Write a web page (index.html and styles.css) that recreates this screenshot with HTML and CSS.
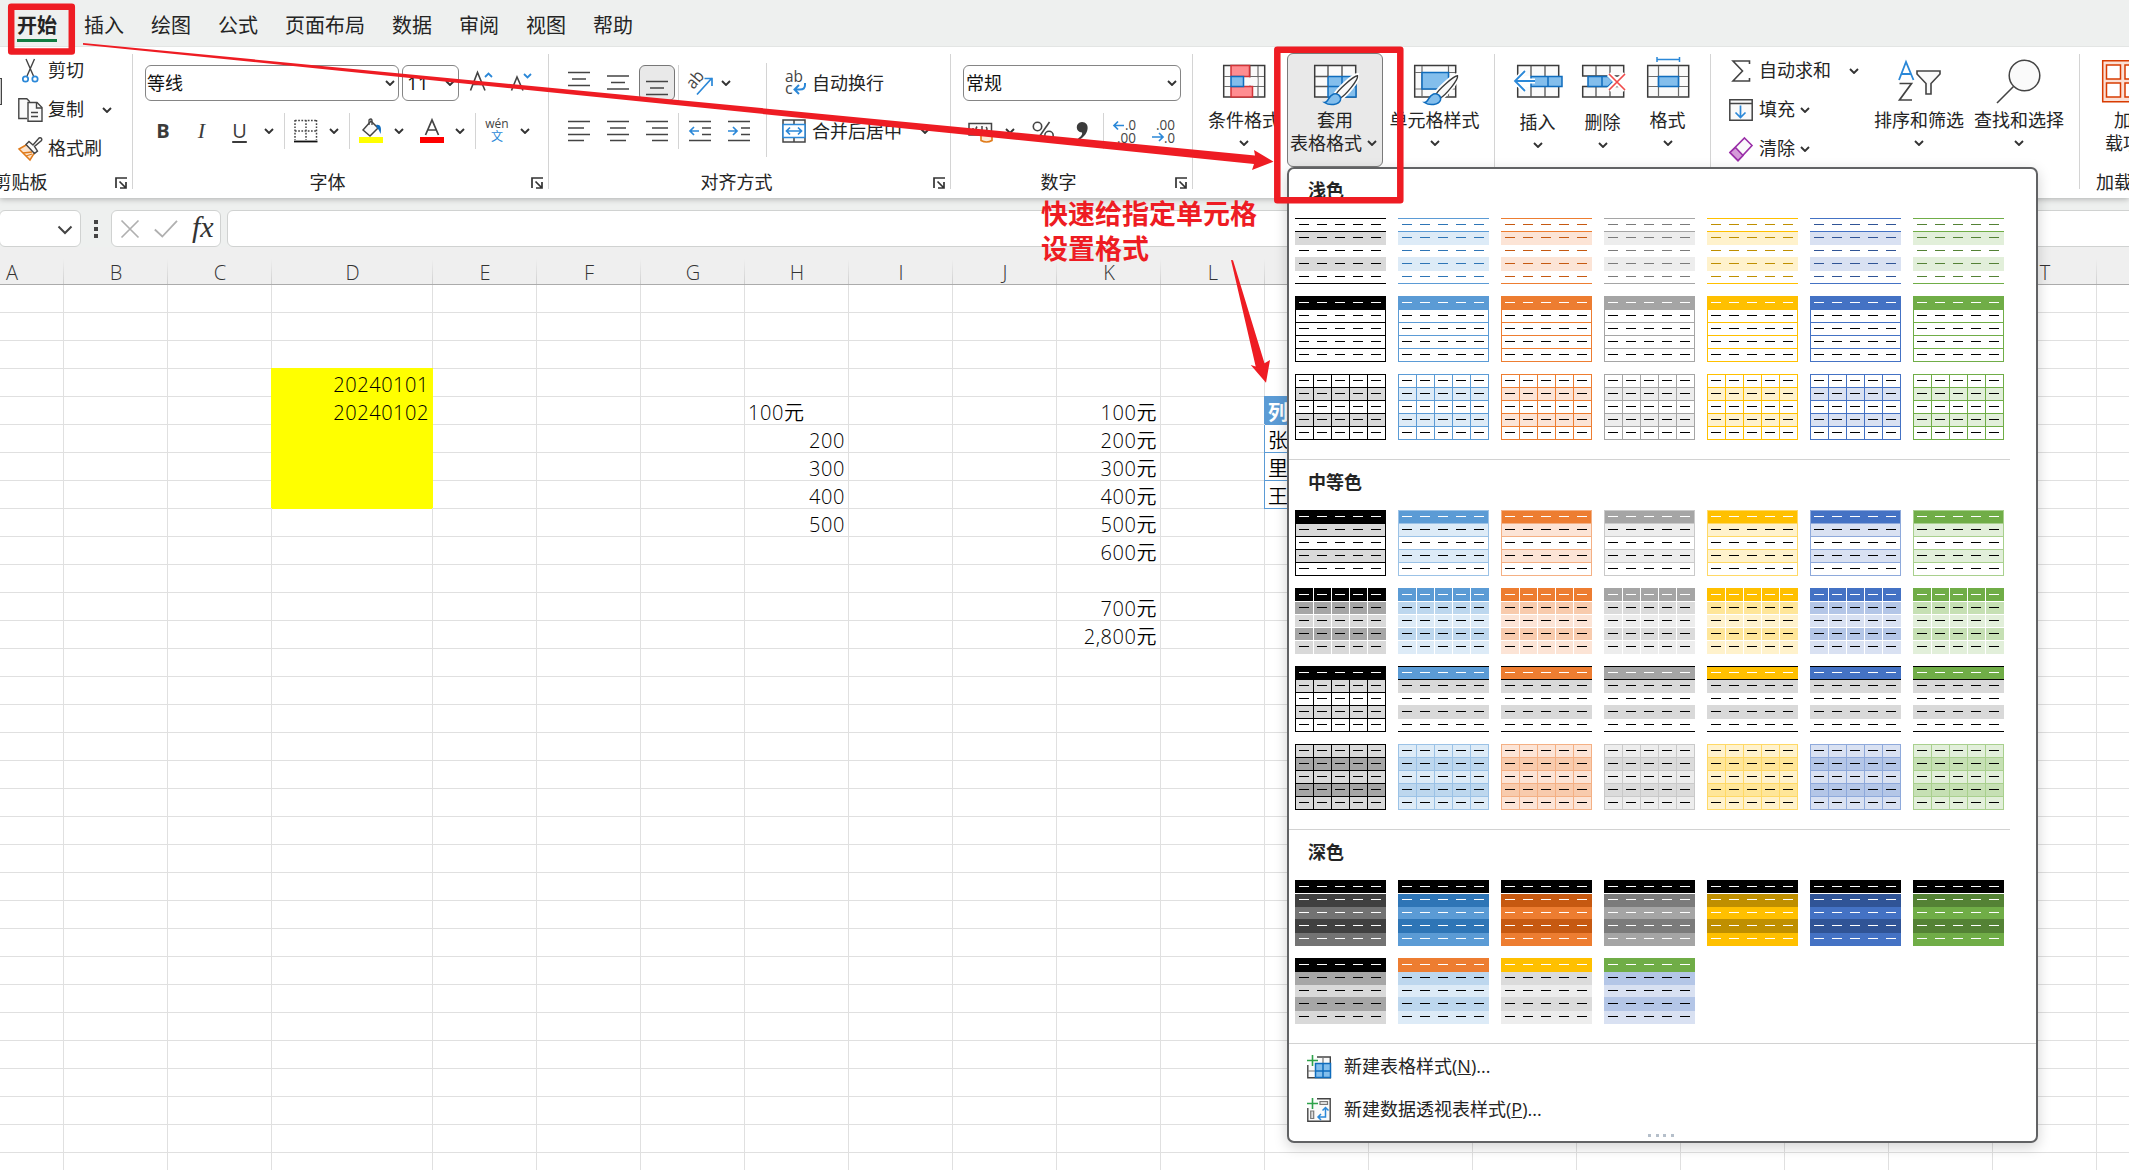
FILE: index.html
```html
<!DOCTYPE html>
<html lang="zh-CN">
<head>
<meta charset="utf-8">
<title>Excel</title>
<link rel="stylesheet" href="styles.css">
</head>
<body>
<svg class="defs" aria-hidden="true">
  <symbol id="chev" viewBox="0 0 10 6"><path d="M1 1l4 4 4-4" fill="none" stroke="#333" stroke-width="1.9"/></symbol>
  <symbol id="launch" viewBox="0 0 12 12"><path d="M1 11V1h11M4.5 4.500l6 6M11 5v6H5" fill="none" stroke="#333" stroke-width="1.7"/></symbol>
  <symbol id="brush" viewBox="0 0 48 48">
    <path d="M46.500 17.500c-4 0-20 15-21.500 19l4.500 3.500c5-3 18-18 17-22.500z" fill="#fff" stroke="#fff" stroke-width="5"/>
    <path d="M46.500 17.800c-4 0-20 15-21.500 18.700l4.500 3.500c5-3 18-18 17-22.200z" fill="#fafafa" stroke="#3b3b3b" stroke-width="1.400"/>
    <path d="M13.500 44.500c4 0 3.500-6.500 9-8.500 4-1.200 8 2 7 6-1.500 5-11 6-16 2.500z" fill="#83beec" stroke="#0f6cbd" stroke-width="1.500"/>
  </symbol>
</svg>

<nav class="tabs">
  <a class="tab active">开始</a><a class="tab">插入</a><a class="tab">绘图</a><a class="tab">公式</a><a class="tab">页面布局</a><a class="tab">数据</a><a class="tab">审阅</a><a class="tab">视图</a><a class="tab">帮助</a>
</nav>

<div class="ribbon">
  <section class="group clipboard">
    <div class="body">
      <div class="paste-edge"></div>
      <div class="stack">
        <div class="line"><svg width="24" height="24" viewBox="0 0 24 24" fill="none"><path d="M8 0l7.500 17M16.500 0L9 17" stroke="#444" stroke-width="1.400"/><circle cx="7.500" cy="20" r="2.700" stroke="#2b88d8" stroke-width="1.700"/><circle cx="17" cy="20" r="2.700" stroke="#2b88d8" stroke-width="1.700"/></svg><span>剪切</span></div>
        <div class="line"><svg width="24" height="24" viewBox="0 0 24 24" fill="#fafafa" stroke="#444" stroke-width="1.400"><path d="M9 20.500H.800V.800h8l3 3"/><path d="M10 4.500h9l5 5V23.200H10z"/><path d="M18.500 4.500v5.500H24M13 14.500h7M13 18.500h7" fill="none"/></svg><span>复制</span><svg class="chev far" viewBox="0 0 10 6"><use href="#chev"/></svg></div>
        <div class="line"><svg width="24" height="24" viewBox="0 0 24 24"><path d="M1 12l11 11 5-8-8-7.500z" fill="#fbe3cd" stroke="#e07b1a" stroke-width="1.500"/><path d="M5 16l9-1M8 19l6-2" stroke="#e07b1a" stroke-width="1.300"/><path d="M8 7.500l3-3 4 3.500 6-7c2-1 3.500 1 2.500 2.500l-7 6 3 4.500-3 2.500z" fill="#fafafa" stroke="#444" stroke-width="1.400"/></svg><span>格式刷</span></div>
      </div>
    </div>
    <footer><span>剪贴板</span><svg class="launch"><use href="#launch"/></svg></footer>
  </section>
  <i class="gsep"></i>

  <section class="group font">
    <div class="body rows">
      <div class="row">
        <div class="combo name"><span>等线</span><svg class="chev"><use href="#chev"/></svg></div>
        <div class="combo size"><span>11</span><svg class="chev"><use href="#chev"/></svg></div>
        <svg class="grow" width="26" height="24" viewBox="0 0 26 24" fill="none"><path d="M1.500 19.500L8.500 1.500l7.500 18M4 13.500h10" stroke="#444" stroke-width="1.600"/><path d="M16 6l3.500-3.500L23 6" stroke="#2b88d8" stroke-width="1.800"/></svg>
        <svg class="shrink" width="26" height="24" viewBox="0 0 26 24" fill="none"><path d="M2.500 19.500L8 6l6 13.500M4.500 15.500h8" stroke="#444" stroke-width="1.600"/><path d="M15 3l3.500 3.500L22 3" stroke="#2b88d8" stroke-width="1.800"/></svg>
      </div>
      <div class="row second">
        <span class="letter b">B</span><span class="letter i">I</span><span class="letter u">U</span>
        <span class="drop flush"><svg class="chev"><use href="#chev"/></svg></span><i class="vsep"></i>
        <svg width="24" height="24" viewBox="0 0 24 24" fill="none"><path d="M1 1.500h22M1 12h22M1 1v20M12 1v20M22.500 1v20" stroke="#444" stroke-width="1.500" stroke-dasharray="1.700 1.500"/><path d="M0 22.500h23.500" stroke="#111" stroke-width="1.800"/></svg>
        <span class="drop"><svg class="chev"><use href="#chev"/></svg></span><i class="vsep"></i>
        <svg width="24" height="26" viewBox="0 0 24 26"><path d="M4 12l8-9 7 7-8 8z" fill="#fafafa" stroke="#444" stroke-width="1.500"/><path d="M10 7V2q2-2 3 0v5" fill="none" stroke="#444" stroke-width="1.300"/><path d="M17 7c4-1 6 2 4.500 9-1-3-2-5-3.500-6z" fill="#0f6cbd"/><path d="M0 19h24v6H0z" fill="#ff0"/></svg>
        <span class="drop"><svg class="chev"><use href="#chev"/></svg></span>
        <svg class="ml10" width="24" height="26" viewBox="0 0 24 26"><path d="M5.500 17L12 2l6.500 15M8 12h8.500" fill="none" stroke="#444" stroke-width="1.700"/><path d="M0 19h24v6H0z" fill="red"/></svg>
        <span class="drop"><svg class="chev"><use href="#chev"/></svg></span><i class="vsep"></i>
        <span class="wen"><span>wén</span><b>文</b></span>
        <span class="drop"><svg class="chev"><use href="#chev"/></svg></span>
      </div>
    </div>
    <footer><span>字体</span><svg class="launch"><use href="#launch"/></svg></footer>
  </section>
  <i class="gsep"></i>

  <section class="group align">
    <div class="body">
      <div class="rows left">
        <div class="row">
          <span class="tool"><svg width="22" height="24" viewBox="0 0 22 24"><path d="M0 1.500h22M4 8h14M0 14.500h22" stroke="#444" stroke-width="1.500"/></svg></span>
          <span class="tool"><svg width="22" height="24" viewBox="0 0 22 24"><path d="M0 5h22M4 11.500h14M0 18h22" stroke="#444" stroke-width="1.500"/></svg></span>
          <span class="tool on"><svg width="22" height="24" viewBox="0 0 22 24"><path d="M0 10.500h22M4 17h14M0 23.500h22" stroke="#444" stroke-width="1.500"/></svg></span>
          <i class="vsep"></i>
          <svg class="orient" width="26" height="26" viewBox="0 0 26 26"><text x="0" y="0" transform="translate(5.500 20) rotate(-50)" font-size="17" fill="#444" textLength="18" lengthAdjust="spacingAndGlyphs">ab</text><path d="M9 24.500L24 8M16.500 8.500H24V16" fill="none" stroke="#2b88d8" stroke-width="1.700"/></svg>
          <span class="drop flush"><svg class="chev"><use href="#chev"/></svg></span>
        </div>
        <div class="row second">
          <span class="tool"><svg width="22" height="22" viewBox="0 0 22 22"><path d="M0 1.500h22M0 8h16M0 14.500h22M0 20.500h16" stroke="#444" stroke-width="1.500"/></svg></span>
          <span class="tool"><svg width="22" height="22" viewBox="0 0 22 22"><path d="M0 1.500h22M3 8h16M0 14.500h22M3 20.500h16" stroke="#444" stroke-width="1.500"/></svg></span>
          <span class="tool"><svg width="22" height="22" viewBox="0 0 22 22"><path d="M0 1.500h22M6 8h16M0 14.500h22M6 20.500h16" stroke="#444" stroke-width="1.500"/></svg></span>
          <i class="vsep"></i>
          <span class="tool close"><svg width="22" height="22" viewBox="0 0 22 22" fill="none"><path d="M0 1.500h22M13 8h9M13 14.500h9M0 20.500h22" stroke="#444" stroke-width="1.500"/><path d="M10 11H1M5 7l-4 4 4 4" stroke="#2b88d8" stroke-width="1.700"/></svg></span>
          <span class="tool"><svg width="22" height="22" viewBox="0 0 22 22" fill="none"><path d="M0 1.500h22M13 8h9M13 14.500h9M0 20.500h22" stroke="#444" stroke-width="1.500"/><path d="M0 11h9M5 7l4 4-4 4" stroke="#2b88d8" stroke-width="1.700"/></svg></span>
        </div>
      </div>
      <i class="tallsep"></i>
      <div class="rows right">
        <div class="row">
          <svg width="25" height="26" viewBox="0 0 25 26"><text x="3" y="12" font-size="16" fill="#444" textLength="18" lengthAdjust="spacingAndGlyphs">ab</text><text x="3" y="24" font-size="16" fill="#444">c</text><path d="M23 13v2q0 4.500-5 4.500h-5M17 15l-4.500 4.500L17 24" fill="none" stroke="#2b88d8" stroke-width="2"/></svg><span class="txt">自动换行</span>
        </div>
        <div class="row second">
          <svg width="25" height="24" viewBox="0 0 25 24" fill="none"><path d="M1 1h22v22H1zM12 1v5M12 18v5" stroke="#444" stroke-width="1.500" fill="#fafafa"/><path d="M1 5.500h22v13H1z" fill="#fff" stroke="#2b88d8" stroke-width="1.500"/><path d="M4.500 12h15M8 8.500L4.500 12 8 15.500M16 8.500l3.500 3.500-3.500 3.500" stroke="#2b88d8" stroke-width="1.700"/></svg><span class="txt">合并后居中</span><svg class="chev merge"><use href="#chev"/></svg>
        </div>
      </div>
    </div>
    <footer><span>对齐方式</span><svg class="launch"><use href="#launch"/></svg></footer>
  </section>
  <i class="gsep"></i>

  <section class="group number">
    <div class="body rows">
      <div class="row"><div class="combo format"><span>常规</span><svg class="chev"><use href="#chev"/></svg></div></div>
      <div class="row second">
        <svg class="cur" width="26" height="26" viewBox="0 0 26 26" fill="#fafafa"><path d="M1 5.500h22.500V17H1z" stroke="#444" stroke-width="1.500"/><path d="M5 10v3M9 8.500q-2 2.500 0 5M14 8v6M18 9q2 2 0 4" stroke="#444" stroke-width="1.500" fill="none"/><path d="M13 15.500v7q5.500 3 11 0v-7q-5.500-3-11 0z" fill="#fdebd8" stroke="#e07b1a" stroke-width="1.600"/></svg>
        <span class="drop"><svg class="chev"><use href="#chev"/></svg></span>
        <span class="tool pct"><svg width="22" height="20" viewBox="0 0 22 20" fill="none" stroke="#444" stroke-width="1.600"><path d="M17.500 1L5 19"/><circle cx="5.500" cy="5.500" r="4.200"/><circle cx="17" cy="14.500" r="4.200"/></svg></span>
        <span class="tool"><svg width="13" height="20" viewBox="0 0 13 20"><path d="M6 1c8 0 8 12-3 18l-1-1.500c4-2.500 4.500-5 4-6C-1 11.500-1 1 6 1z" fill="#3b3b3b"/></svg></span>
        <i class="vsep"></i>
        <span class="tool close"><svg width="26" height="26" viewBox="0 0 26 26"><g font-size="15" fill="#444"><text x="13" y="11.500" textLength="11" lengthAdjust="spacingAndGlyphs">.0</text><text x="5" y="24.500" textLength="19" lengthAdjust="spacingAndGlyphs">.00</text></g><path d="M12 7.500H1.500M6 3.500l-4 4 4 4" fill="none" stroke="#2b88d8" stroke-width="1.700"/></svg></span>
        <span class="tool dec"><svg width="26" height="26" viewBox="0 0 26 26"><g font-size="15" fill="#444"><text x="5" y="11.500" textLength="19" lengthAdjust="spacingAndGlyphs">.00</text><text x="13" y="24.500" textLength="11" lengthAdjust="spacingAndGlyphs">.0</text></g><path d="M1 19h11M8 15l4 4-4 4" fill="none" stroke="#2b88d8" stroke-width="1.700"/></svg></span>
      </div>
    </div>
    <footer><span>数字</span><svg class="launch"><use href="#launch"/></svg></footer>
  </section>
  <i class="gsep"></i>

  <section class="group styles">
    <div class="body">
      <div class="big cond">
        <svg width="48" height="48" viewBox="0 0 48 48"><path d="M3.700 7.500h41v31.500h-41z" fill="#fafafa" stroke="#3b3b3b" stroke-width="1.500"/><path d="M4 18.500h40M4 28.500h40M38 8v31M30 8v31" stroke="#6b6b6b" stroke-width="1.200"/><path d="M24 19.500h13.500v8H24z" fill="#fafafa"/><path d="M11 7.500h18.500v11H11zM11 28.500h21.500V39H11z" fill="#ff8d91" stroke="#d13438" stroke-width="1.500"/><path d="M11 18.500h12.500v10H11z" fill="#83beec" stroke="#0f6cbd" stroke-width="1.500"/></svg>
        <span>条件格式</span><svg class="chev"><use href="#chev"/></svg>
      </div>
      <div class="big tablefmt">
        <svg width="48" height="48" viewBox="0 0 48 48"><path d="M3.700 7.500h41v31.500h-41z" fill="#fafafa" stroke="#3b3b3b" stroke-width="1.500"/><path d="M17 18.500h28V39H17z" fill="#83beec" stroke="#0f6cbd" stroke-width="1.500"/><path d="M31 19v20M17 28.500h28" stroke="#0f6cbd" stroke-width="1.500"/><path d="M4 18.500h13M4 28.500h13M17 8v10M31 8v10" stroke="#555" stroke-width="1.400"/><use href="#brush" width="48" height="48"/></svg>
        <span>套用</span><div class="pair"><span>表格格式</span><svg class="chev"><use href="#chev"/></svg></div>
      </div>
      <div class="big cellstyle">
        <svg width="48" height="48" viewBox="0 0 48 48"><path d="M3.700 7.500h41v31.500h-41z" fill="#fafafa" stroke="#3b3b3b" stroke-width="1.500"/><path d="M4 14.500h40M4 31h40M11 8v31M37.500 8v31" stroke="#6b6b6b" stroke-width="1.200"/><path d="M11 14.500h26.500V31H11z" fill="#83beec" stroke="#0f6cbd" stroke-width="1.500"/><use href="#brush" width="48" height="48"/></svg>
        <span>单元格样式</span><svg class="chev"><use href="#chev"/></svg>
      </div>
    </div>
    <footer></footer>
  </section>
  <i class="gsep"></i>

  <section class="group cells">
    <div class="body">
      <div class="big low">
        <svg width="50" height="48" viewBox="0 0 50 48"><path d="M4.700 7.500h41v31.500h-41z" fill="#fafafa" stroke="#3b3b3b" stroke-width="1.500"/><path d="M18 8v31M32 8v31" stroke="#555" stroke-width="1.300"/><path d="M1 18h22v11H1z" fill="#fff"/><path d="M18 18.500h31v10H18zM35 18.500v10" fill="#83beec" stroke="#0f6cbd" stroke-width="1.500"/><path d="M22 23H3M12 13L2 23l10 10" fill="none" stroke="#fff" stroke-width="5"/><path d="M22 23H3M12 13L2 23l10 10" fill="none" stroke="#2b88d8" stroke-width="1.800"/></svg>
        <span>插入</span><svg class="chev"><use href="#chev"/></svg>
      </div>
      <div class="big low">
        <svg width="48" height="48" viewBox="0 0 48 48"><path d="M3.700 7.500h41v10.500h-41zM3.700 28.500h41V39h-41z" fill="#fafafa" stroke="#3b3b3b" stroke-width="1.500"/><path d="M17 8v10M31 8v10M17 29v10M31 29v10" stroke="#555" stroke-width="1.300"/><path d="M9 18.500h20l5 5-5 5H9zM23 18.500v10" fill="#83beec" stroke="#0f6cbd" stroke-width="1.500"/><path d="M30 16l16 16M46 16L30 32" stroke="#fff" stroke-width="6"/><path d="M30 16l16 16M46 16L30 32" stroke="#f04b4b" stroke-width="1.700"/></svg>
        <span>删除</span><svg class="chev"><use href="#chev"/></svg>
      </div>
      <div class="big">
        <svg width="48" height="48" viewBox="0 0 48 48"><path d="M3.700 7.500h41v31.500h-41z" fill="#fafafa" stroke="#3b3b3b" stroke-width="1.500"/><path d="M4 18.500h40M4 28.500h40M14.500 8v31M34.500 8v31" stroke="#6b6b6b" stroke-width="1.200"/><path d="M14.500 18.500h20v10h-20z" fill="#83beec" stroke="#0f6cbd" stroke-width="1.600"/><path d="M13 1.500h22.500M13-1v5M35.500-1v5" stroke="#2b88d8" stroke-width="1.500"/></svg>
        <span>格式</span><svg class="chev"><use href="#chev"/></svg>
      </div>
    </div>
    <footer></footer>
  </section>
  <i class="gsep"></i>

  <section class="group editing">
    <div class="body">
      <div class="stack">
        <div class="line"><svg width="24" height="24" viewBox="0 0 24 24"><path d="M20.500 5V2H4l9.500 10L4 22h16.500v-3" fill="none" stroke="#444" stroke-width="1.600"/></svg><span>自动求和</span><svg class="chev sum"><use href="#chev"/></svg></div>
        <div class="line"><svg width="24" height="24" viewBox="0 0 24 24" fill="none"><path d="M.800 1.800h22.400v20.400H.800zM1 5.500h22" fill="#fafafa" stroke="#444" stroke-width="1.500"/><path d="M11.500 7.500V19M6.500 14.500l5 5 5-5" stroke="#2b88d8" stroke-width="1.700"/></svg><span>填充</span><svg class="chev near"><use href="#chev"/></svg></div>
        <div class="line"><svg width="24" height="24" viewBox="0 0 24 24"><path d="M15.500 1L23 8.500 9 23.500 1 15.500z" fill="#fafafa" stroke="#9a2fa8" stroke-width="1.600"/><path d="M6.500 10.500l7.500 8-5 5-8-8z" fill="#d59ad9" stroke="#9a2fa8" stroke-width="1.600"/></svg><span>清除</span><svg class="chev near"><use href="#chev"/></svg></div>
      </div>
      <div class="big sort">
        <svg width="48" height="48" viewBox="0 0 48 48" fill="none"><path d="M4 22l7-18 7.500 18M6.500 16h9.500" stroke="#2b88d8" stroke-width="1.800"/><path d="M4.500 25.500H16.500L4.500 42H17" stroke="#444" stroke-width="1.700"/><path d="M22 13h23v3l-9 9.500V36h-5V25.500L22 16z" fill="#fafafa" stroke="#444" stroke-width="1.600"/></svg>
        <span>排序和筛选</span><svg class="chev"><use href="#chev"/></svg>
      </div>
      <div class="big">
        <svg width="48" height="48" viewBox="0 0 48 48"><circle cx="29.500" cy="17.500" r="15.300" fill="#fafafa" stroke="#444" stroke-width="1.500"/><path d="M18.500 28.500L2 45" stroke="#444" stroke-width="1.600"/></svg>
        <span>查找和选择</span><svg class="chev"><use href="#chev"/></svg>
      </div>
    </div>
    <footer></footer>
  </section>
  <i class="gsep"></i>

  <section class="group addins">
    <div class="body">
      <div class="big">
        <svg width="48" height="48" viewBox="0 0 48 48" fill="#fff" stroke="#d83b01" stroke-width="1.500"><path d="M3.700 2.700h41v41h-41z" fill="#fbe0d5"/><path d="M7.500 7h14v14h-14zM26 7h14v14H26zM7.500 25h14v14h-14zM26 25h14v14H26z"/></svg>
        <span>加</span><div class="pair"><span>载项</span></div>
      </div>
    </div>
    <footer><span>加载项</span></footer>
  </section>
</div>

<div class="formula-bar">
  <div class="namebox"><svg width="16" height="10" viewBox="0 0 16 10"><path d="M1.500 1.500L8 8l6.500-6.500" fill="none" stroke="#444" stroke-width="2"/></svg></div>
  <div class="dots"><i></i><i></i><i></i></div>
  <div class="fxbox">
    <svg width="18" height="18" viewBox="0 0 18 18"><path d="M.500.500l17 17M17.500.500l-17 17" stroke="#b0b0b0" stroke-width="1.700"/></svg>
    <svg width="24" height="18" viewBox="0 0 24 18"><path d="M.800 9.500l7.500 7L23 .800" fill="none" stroke="#b0b0b0" stroke-width="1.800"/></svg>
    <em>fx</em>
  </div>
  <div class="input"></div>
</div>

<div class="sheet">
  <div class="col first"><h6>A</h6></div>
  <div class="col"><h6>B</h6></div>
  <div class="col"><h6>C</h6></div>
  <div class="col wide"><h6>D</h6><p></p><p></p><p></p><p class="yellow">20240101</p><p class="yellow">20240102</p><p class="yellow"></p><p class="yellow"></p><p class="yellow"></p></div>
  <div class="col"><h6>E</h6></div>
  <div class="col"><h6>F</h6></div>
  <div class="col"><h6>G</h6></div>
  <div class="col"><h6>H</h6><p></p><p></p><p></p><p></p><p class="text">100元</p><p>200</p><p>300</p><p>400</p><p>500</p></div>
  <div class="col"><h6>I</h6></div>
  <div class="col"><h6>J</h6></div>
  <div class="col"><h6>K</h6><p></p><p></p><p></p><p></p><p>100元</p><p>200元</p><p>300元</p><p>400元</p><p>500元</p><p>600元</p><p></p><p>700元</p><p>2,800元</p></div>
  <div class="col"><h6>L</h6></div>
  <div class="col"><h6></h6><p></p><p></p><p></p><p></p><p class="text th">列1</p><p class="text td">张三</p><p class="text td">里斯</p><p class="text td">王五</p></div>
  <div class="col"><h6></h6></div><div class="col"><h6></h6></div><div class="col"><h6></h6></div><div class="col"><h6></h6></div><div class="col"><h6></h6></div><div class="col"><h6></h6></div>
  <div class="col"><h6>T</h6></div>
  <div class="col"><h6></h6></div>
</div>

<div class="gallery">
  <h3>浅色</h3>
  <div class="swatches">
    <i class="lines k"></i><i class="lines b"></i><i class="lines o"></i><i class="lines g"></i><i class="lines y"></i><i class="lines n"></i><i class="lines v"></i>
    <i class="boxed k"></i><i class="boxed b"></i><i class="boxed o"></i><i class="boxed g"></i><i class="boxed y"></i><i class="boxed n"></i><i class="boxed v"></i>
    <i class="grid k"></i><i class="grid b"></i><i class="grid o"></i><i class="grid g"></i><i class="grid y"></i><i class="grid n"></i><i class="grid v"></i>
  </div>
  <hr>
  <h3>中等色</h3>
  <div class="swatches">
    <i class="banded k"></i><i class="banded b"></i><i class="banded o"></i><i class="banded g"></i><i class="banded y"></i><i class="banded n"></i><i class="banded v"></i>
    <i class="tiles k"></i><i class="tiles b"></i><i class="tiles o"></i><i class="tiles g"></i><i class="tiles y"></i><i class="tiles n"></i><i class="tiles v"></i>
    <i class="headgrid k"></i><i class="ruled b"></i><i class="ruled o"></i><i class="ruled g"></i><i class="ruled y"></i><i class="ruled n"></i><i class="ruled v"></i>
    <i class="fullgrid k"></i><i class="fullgrid b"></i><i class="fullgrid o"></i><i class="fullgrid g"></i><i class="fullgrid y"></i><i class="fullgrid n"></i><i class="fullgrid v"></i>
  </div>
  <hr>
  <h3>深色</h3>
  <div class="swatches">
    <i class="dark k"></i><i class="dark b"></i><i class="dark o"></i><i class="dark g"></i><i class="dark y"></i><i class="dark n"></i><i class="dark v"></i>
    <i class="duo k"></i><i class="duo b head-o"></i><i class="duo g head-y"></i><i class="duo n head-v"></i>
  </div>
  <hr class="full">
  <div class="cmd"><svg width="24" height="24" viewBox="0 0 24 24"><path d="M10 2h13.300v20.700H.800V10" fill="#fafafa" stroke="#444" stroke-width="1.400"/><path d="M16 2v6M1 16h7" stroke="#777" stroke-width="1.200"/><path d="M8.500 8.500h15v14h-15zM16 8.500v14M8.500 16h15" fill="#83beec" stroke="#0f6cbd" stroke-width="1.500"/><path d="M5.500 0v11M0 5.500h11" stroke="#2ea24a" stroke-width="1.600"/></svg><span>新建表格样式(<u>N</u>)...</span></div>
  <div class="cmd"><svg width="24" height="24" viewBox="0 0 24 24" fill="none"><path d="M10 .800h13.200v22.400H.800V10" fill="#fafafa" stroke="#444" stroke-width="1.400"/><path d="M13 3.500h7.500v3H13zM3.700 13h3v7.500h-3z" fill="#ddd" stroke="#777" stroke-width="1.200"/><path d="M18.500 10v9h-7M15.500 12.500l3-3 3 3M14 16l-3 3 3 3" stroke="#2b88d8" stroke-width="1.500"/><path d="M5.500 0v11M0 5.500h11" stroke="#2ea24a" stroke-width="1.600"/></svg><span>新建数据透视表样式(<u>P</u>)...</span></div>
  <div class="grip"><i></i><i></i><i></i><i></i></div>
</div>

<div class="note">快速给指定单元格<br>设置格式</div>
<svg class="marks" viewBox="0 0 2129 1170">
  <g fill="none" stroke="#ee1c23" stroke-width="6.500" stroke-linejoin="round"><path d="M11.200 6.800h60.600v44.600H11.200z"/><path d="M1277.300 49.800h123v150.500h-123z"/></g>
  <g fill="#ee1c23"><path d="M83 43l1172 112.500-1-5.500 19.500 11.700-21.500 8.300 2-6L83 44.700z"/><path d="M1231 260l2 .200 31.500 103 5.500-3.200-4 22.700-15.300-17.700 5 1.500z"/></g>
</svg>
</body>
</html>
```
FILE: styles.css
```css
* { box-sizing: border-box; }
html, body { margin: 0; height: 100%; overflow: hidden; }
body {
  position: relative;
  width: 2129px;
  height: 1170px;
  display: flex;
  flex-direction: column;
  background: #eef0ef;
  color: #242424;
  font: 18px/24px "Open Sans", "Noto Sans CJK SC", sans-serif;
}
i { font-style: normal; }
svg { flex: none; display: block; overflow: visible; }
.defs { position: absolute; width: 0; height: 0; }
.chev { width: 10px; height: 6px; }

/* ribbon tabs */
.tabs { flex: none; height: 47px; display: flex; gap: 27px; padding-left: 17px; border-bottom: 1px solid #e3e5e4; font-size: 20px; }
.tab { height: 42px; padding-top: 14px; }
.tab.active { font-weight: 700; border-bottom: 3px solid #107c41; }

/* ribbon */
.ribbon { flex: none; position: relative; z-index: 1; height: 151px; display: flex; margin-bottom: 12px; background: #fff; box-shadow: 0 1px 6px rgba(0, 0, 0, .28); clip-path: inset(0 0 -12px 0); }
.group { flex: none; display: flex; flex-direction: column; }
.gsep { flex: none; width: 1px; margin: 7px 0 9px; background: #d4d4d4; }
.body { height: 124px; display: flex; }
.rows { display: flex; flex-direction: column; }
.group footer { height: 22px; display: flex; align-items: center; text-align: center; }
.group footer span { flex: 1; white-space: nowrap; }
.launch { width: 12px; height: 12px; margin: 2px 5px 0 9px; }
.clipboard { width: 197px; margin-left: -65px; }
.font { width: 415px; }
.align { width: 401px; }
.number { width: 241px; }
.styles { width: 301px; }
.cells { width: 215px; }
.editing { width: 368px; }
.addins { width: 86px; }
.styles .body { padding-left: 8px; }
.cells .body { padding-left: 10px; }

.paste-edge { width: 67px; height: 27px; margin-top: 31px; background: #c9c9c9; border: solid #444; border-width: 1px 1.500px 1px 0; }
.stack { display: flex; flex-direction: column; padding: 12px 0 0 16px; gap: 15px; white-space: nowrap; }
.line { height: 24px; display: flex; align-items: center; }
.line span { margin: -2px 0 0 6px; }
.chev.far { margin-left: 18px; }
.chev.sum { margin-left: 18px; }
.chev.near { margin-left: 5px; }
.editing .stack { width: 158px; padding-left: 18px; }

.row { height: 36px; margin-top: 18px; display: flex; align-items: center; padding-left: 12px; }
.row.second { margin-top: 12px; }
.font .second { padding-left: 11px; }
.combo { height: 36px; display: flex; align-items: center; justify-content: space-between; border: 1px solid #858585; border-radius: 6px; padding: 0 3px 0 2px; color: #111; background: #fff; }
.combo.name { width: 254px; padding-left: 1px; }
.combo.size { width: 57px; margin-left: 3px; padding-left: 4px; font-size: 19px; }
.combo.format { width: 218px; }
.grow { margin-left: 10px; }
.shrink { margin-left: 14px; }
.letter { width: 38px; text-align: center; color: #3b3b3b; font-size: 20px; }
.letter.b { font-weight: 700; }
.letter.i { padding-left: 1px; font-family: "Liberation Serif", serif; font-style: italic; font-size: 22px; }
.letter.u { padding-left: 1px; text-decoration: underline; text-underline-offset: 3px; text-decoration-thickness: 1.500px; }
.drop { width: 22px; margin-left: 5px; display: flex; justify-content: center; }
.drop.flush { margin-left: 0; }
.vsep { flex: none; width: 1px; height: 36px; margin: 0 9px 0 4px; background: #d4d4d4; }
.ml10 { margin-left: 10px; }
.wen { width: 24px; height: 26px; font-size: 12px; line-height: 12px; color: #444; text-align: center; }
.wen span, .wen b { display: block; }
.wen b { font-weight: 400; color: #2b88d8; line-height: 13px; }
.tool { flex: none; width: 36px; height: 36px; margin-right: 3px; display: flex; align-items: center; justify-content: center; }
.tool.on { background: #e9e9e9; border: 1px solid #777; border-radius: 6px; }
.tool + .vsep { margin-left: 0; }
.tool.close { margin-left: -6px; }
.tool.pct { margin-left: 4px; }
.orient { margin-right: 1px; }
.align .left { width: 217px; }
.align .right .row { padding-left: 15px; }
.tallsep { width: 1px; margin: 16px 0 14px; background: #d4d4d4; }
.txt { margin: -1px 0 0 5px; white-space: nowrap; }
.chev.merge { margin-left: 18px; }
.number .second { padding-left: 17px; }

.big { flex: none; width: 65px; margin-top: 6px; padding-top: 5px; height: 114px; display: flex; flex-direction: column; align-items: center; white-space: nowrap; }
.big > span { margin-top: 2px; height: 23px; }
.big > .chev { margin-top: 9px; }
.big.low > span { margin-top: 4px; }
.big .pair { display: flex; align-items: center; gap: 5px; height: 23px; margin-left: -3px; }
.cond { width: 86px; }
.cond > svg:first-child { margin-left: -1px; }
.tablefmt { width: 96px; background: #e9e9e9; border: 1px solid #7a7a7a; border-radius: 6px; padding-top: 4px; }
.cellstyle { width: 103px; }
.sort, .sort + .big { width: 100px; }
.addins .big { width: 86px; }
.addins .pair { margin-left: 0; }

/* formula bar */
.formula-bar { flex: none; height: 37px; display: flex; }
.formula-bar > div { height: 37px; display: flex; align-items: center; }
.namebox, .fxbox, .input { background: #fff; border: 1px solid #d0d2d1; border-radius: 6px; }
.namebox { width: 82px; margin-left: -1px; justify-content: flex-end; padding: 2px 7px 0 0; }
.formula-bar .dots { width: 30px; flex-direction: column; justify-content: center; gap: 3px; }
.dots i { width: 4px; height: 4px; background: #444; }
.fxbox { width: 110px; padding-left: 9px; gap: 15px; }
.fxbox em { font: italic 30px/30px "Liberation Serif", serif; margin: -4px 0 0 -1px; color: #333; }
.input { flex: 1; margin: 0 -9px 0 6px; }

/* worksheet */
.sheet { flex: 1; display: flex; overflow: hidden; }
.col { flex: none; width: 104px; border-right: 1px solid #e0e0e0; background: repeating-linear-gradient(#fff 0 27px, #e0e0e0 27px 28px) 0 38px; }
.col.first { margin-left: -40px; }
.col.wide { width: 161px; }
.col h6 { margin: 0 -1px 0 0; height: 38px; padding-top: 13px; text-align: center; font-size: 20px; font-weight: 350; line-height: 26px; color: #333; background: linear-gradient(#efefef, #cfcfcf) right 12px / 1px 25px no-repeat, #efefef; border-bottom: 1px solid #ababab; }
.col p { margin: 0; height: 28px; padding: 2px 3px 0; text-align: right; font-size: 20px; line-height: 28px; font-weight: 350; color: #000; letter-spacing: .55px; white-space: nowrap; }
.col p.text { text-align: left; }
.col p.yellow { background: #ff0; box-shadow: -1px -1px #ff0, 1px -1px #ff0; }
.col p.th { background: #5b9bd5; color: #fff; font-weight: 700; box-shadow: -1px -1px #5b9bd5; }
.col p.td { border-bottom: 1px solid #5b9bd5; box-shadow: -1px 0 #5b9bd5; background: #fff; line-height: 27px; }

/* table style gallery */
.gallery { position: absolute; z-index: 2; left: 1287px; top: 167px; width: 751px; height: 976px; background: #fff; border: 2px solid #616264; border-radius: 7px; box-shadow: 0 4px 14px rgba(0, 0, 0, .18); overflow: hidden; }
.gallery h3 { margin: 0; padding: 9px 0 0 19px; height: 49px; font-size: 18px; line-height: 24px; font-weight: 700; }
.swatches { display: grid; grid-template-columns: repeat(7, 91px); grid-auto-rows: 66px; gap: 12px; padding-left: 6px; }
.gallery hr { margin: 19px 26px 1px 0; border: 0; height: 1px; background: #d2d2d2; }
.gallery hr.full { margin: 19px 0 1px; }
.cmd { height: 43px; display: flex; align-items: center; padding-left: 18px; gap: 13px; }
.cmd span { margin-top: -2px; }
.grip { display: flex; gap: 4.500px; padding-left: 359px; margin-top: 3px; }
.grip i { width: 3px; height: 3px; background: #b5bfca; }

.k { --a: #000; --dk: #000; --line: #000; --mid: #a6a6a6; --lt: #d9d9d9; --r1: #404040; --r2: #737373; }
.b { --a: #5b9bd5; --dk: #2e75b6; --line: #9bc2e6; --mid: #bdd7ee; --lt: #ddebf7; }
.o { --a: #ed7d31; --dk: #c65911; --line: #f4b084; --mid: #f8cbad; --lt: #fce4d6; }
.g { --a: #a5a5a5; --dk: #7b7b7b; --line: #c9c9c9; --mid: #dbdbdb; --lt: #ededed; }
.y { --a: #ffc000; --dk: #bf8f00; --line: #ffd966; --mid: #ffe699; --lt: #fff2cc; }
.n { --a: #4472c4; --dk: #305496; --line: #8ea9db; --mid: #b4c6e7; --lt: #d9e1f2; }
.v { --a: #70ad47; --dk: #548235; --line: #a9d08e; --mid: #c6e0b4; --lt: #e2efda; }
.head-o { --a: #ed7d31; }
.head-y { --a: #ffc000; }
.head-v { --a: #70ad47; }

.swatches i {
  --head: #fff; --odd: #fff; --even: #fff; --hd: #000; --bd: #000; --h: transparent; --vl: transparent;
  --d1: linear-gradient(90deg, transparent 4px, var(--hd) 4px 14px, transparent 14px);
  --d2: linear-gradient(90deg, transparent 4px, var(--bd) 4px 14px, transparent 14px);
  --hlines: repeating-linear-gradient(var(--h) 0 1px, transparent 1px 13px) 0 0 / 91px 66px no-repeat;
  --vlines: repeating-linear-gradient(90deg, var(--vl) 0 1px, transparent 1px 18px) 0 0 / 91px 66px no-repeat;
  background:
    var(--d1) 0 6px / 18px 1px repeat-x,
    var(--d2) 0 19px / 18px 1px repeat-x,
    var(--d2) 0 32px / 18px 1px repeat-x,
    var(--d2) 0 45px / 18px 1px repeat-x,
    var(--d2) 0 58px / 18px 1px repeat-x,
    var(--hlines),
    var(--vlines),
    linear-gradient(var(--head) 14px, var(--odd) 14px 27px, var(--even) 27px 39px, var(--odd) 39px 53px, var(--even) 53px);
}
.swatches .lines { --odd: var(--lt); --hd: var(--dk); --bd: var(--dk); --hlines: linear-gradient(var(--a) 1px, transparent 1px 13px, var(--a) 13px 14px, transparent 14px 65px, var(--a) 65px); }
.swatches .boxed { --head: var(--a); --hd: #fff; --h: var(--a); --vlines: linear-gradient(90deg, var(--a) 1px, transparent 1px 90px, var(--a) 90px); }
.swatches .grid { --odd: var(--lt); --h: var(--a); --vl: var(--a); }
.swatches .banded { --head: var(--a); --hd: #fff; --odd: var(--lt); --h: var(--line); --vlines: linear-gradient(90deg, var(--line) 1px, transparent 1px 90px, var(--line) 90px); }
.swatches .tiles { --head: var(--a); --hd: #fff; --odd: var(--mid); --even: var(--lt);
  --hlines: repeating-linear-gradient(#fff 0 1px, transparent 1px 13px) 0 13px / 91px 40px no-repeat;
  --vlines: repeating-linear-gradient(90deg, #fff 0 1px, transparent 1px 18px) 18px 0 / 55px 66px no-repeat; }
.swatches .headgrid { --head: #000; --hd: #fff; --odd: var(--lt); --h: #000; --vl: #000; }
.swatches .ruled { --head: var(--a); --hd: #fff; --odd: #d9d9d9; --hlines: linear-gradient(#000 1px, transparent 1px 13px, #000 13px 14px, transparent 14px 65px, #000 65px); }
.swatches .fullgrid { --head: var(--lt); --odd: var(--mid); --even: var(--lt); --h: var(--line); --vl: var(--line); }
.swatches .dark { --head: #000; --hd: #fff; --bd: #fff; --odd: var(--r1, var(--dk)); --even: var(--r2, var(--a)); --hlines: linear-gradient(transparent 13px, #fff 13px 14px, transparent 14px); }
.swatches .duo { --head: var(--a); --hd: #fff; --odd: var(--mid); --even: var(--lt); }

/* annotations */
.note { position: absolute; z-index: 3; left: 1041px; top: 197px; font-size: 27px; line-height: 34.500px; font-weight: 700; color: #ee1c23; white-space: nowrap; }
.marks { position: absolute; z-index: 4; left: 0; top: 0; width: 2129px; height: 1170px; pointer-events: none; }
```
